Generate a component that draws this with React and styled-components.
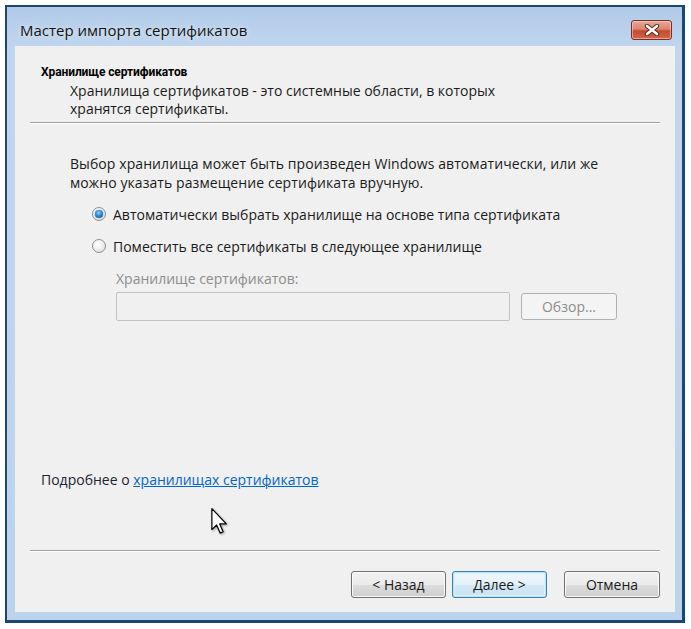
import React from "react";
import styled, { createGlobalStyle, css } from "styled-components";

const GlobalStyle = createGlobalStyle`
  html, body { margin: 0; padding: 0; background: #ffffff; }
  body { font-family: "Open Sans", "Noto Sans", sans-serif; }
  * { box-sizing: border-box; }
`;

const Page = styled.div`
  padding: 5px 0 0 5px;
`;

const Window = styled.div`
  width: 680px;
  height: 618px;
  border-style: solid;
  border-color: #1b4774;
  border-width: 2px 3px 3px 2px;
  background: linear-gradient(to bottom, #b0cae7 0px, #c0d6ee 40px, #bcd3ec 100%);
  padding: 0 7px 8px 8px;
  display: flex;
  flex-direction: column;
`;

const TitleBar = styled.div`
  height: 39px;
  padding: 13px 3px 0 5px;
  display: flex;
  justify-content: space-between;
  align-items: flex-start;
`;

const TitleText = styled.div`
  font-size: 15px;
  line-height: 20px;
  color: #141414;
  text-shadow: 0 0 6px rgba(255, 255, 255, 0.8);
`;

const CloseButton = styled.div`
  width: 41px;
  height: 20px;
  border: 1px solid #7d2d1f;
  border-radius: 3px;
  background: linear-gradient(
    to bottom,
    #e8a899 0%,
    #d98571 45%,
    #c44b31 55%,
    #d2664c 100%
  );
  box-shadow: inset 0 0 0 1px rgba(255, 220, 210, 0.55);
  display: flex;
  align-items: center;
  justify-content: center;
`;

const Client = styled.div`
  position: relative;
  height: 566px;
  background: #f0f0f0;
  display: flex;
  flex-direction: column;
  font-size: 14px;
  color: #1b1b1b;
`;

const Header = styled.div`
  padding: 17px 0 0 26px;
`;

const HeaderTitle = styled.div`
  font-family: Roboto, "Open Sans", sans-serif;
  font-weight: 700;
  font-size: 12px;
  letter-spacing: -0.1px;
  line-height: 19px;
  color: #000;
`;

const HeaderSub = styled.div`
  padding-left: 29px;
  line-height: 18px;
`;

const Separator = styled.div`
  margin: ${(p) => p.$top || 0}px 15px 0;
  border-top: 1px solid #a0a0a0;
  border-bottom: 1px solid #ffffff;
`;

const Body = styled.div`
  flex: 1;
  padding: 30px 0 0 55px;
`;

const Intro = styled.div`
  line-height: 19px;
  letter-spacing: 0.08px;
`;

const RadioList = styled.div`
  margin-top: 11px;
  margin-left: 22px;
  display: flex;
  flex-direction: column;
  gap: 10px;
`;

const RadioRow = styled.div`
  height: 22px;
  display: flex;
  align-items: center;
  gap: 7px;
`;

const RadioCircle = styled.span`
  width: 14px;
  height: 14px;
  border-radius: 50%;
  border: 1px solid #8b8e91;
  background: radial-gradient(circle at 40% 35%, #ffffff 0%, #f2f2f2 40%, #d6d6d6 100%);
  display: flex;
  align-items: center;
  justify-content: center;
  flex-shrink: 0;
  ${(p) =>
    p.$checked &&
    css`
      &::after {
        content: "";
        width: 8px;
        height: 8px;
        border-radius: 50%;
        background: radial-gradient(circle at 45% 35%, #8fd0ff 0%, #2a8ad8 45%, #0f4f96 100%);
        box-shadow: 0 0 1px #0c3b70;
      }
    `}
`;

const StoreGroup = styled.div`
  margin-left: 46px;
  margin-top: 12px;
`;

const StoreLabel = styled.div`
  line-height: 19px;
  color: #8d8d8d;
`;

const StoreRow = styled.div`
  margin-top: 4px;
  display: flex;
  align-items: center;
  gap: 11px;
`;

const StoreInput = styled.input`
  width: 394px;
  height: 29px;
  border: 1px solid #c3c3c3;
  border-radius: 2px;
  background: #f0f0f0;
  margin: 0;
  padding: 0 4px;
  font: inherit;
`;

const buttonBase = css`
  height: 27px;
  border-radius: 3px;
  font-family: inherit;
  font-size: 14px;
  padding: 0;
  display: flex;
  align-items: center;
  justify-content: center;
`;

const BrowseButton = styled.button`
  ${buttonBase};
  width: 96px;
  border: 1px solid #adb2b5;
  background: #f4f4f4;
  color: #8d8d8d;
`;

const LinkRow = styled.div`
  padding-left: 26px;
  margin-bottom: 61px;
  line-height: 19px;
  color: #1c2433;
`;

const Link = styled.a`
  color: #0066cc;
  text-decoration: underline;
`;

const ButtonRow = styled.div`
  display: flex;
  justify-content: flex-end;
  padding: 19px 15px 14px;
`;

const WizardButton = styled.button`
  ${buttonBase};
  width: ${(p) => p.$width}px;
  margin-left: ${(p) => p.$gap || 0}px;
  color: #1b1b1b;
  border: 1px solid #707070;
  background: linear-gradient(to bottom, #f2f2f2 0%, #ebebeb 50%, #dddddd 51%, #cfcfcf 100%);
  box-shadow: inset 0 0 0 1px #fbfbfb;
  ${(p) =>
    p.$default &&
    css`
      border-color: #3c7fb1;
      background: linear-gradient(to bottom, #eef7fd 0%, #e4f1fa 50%, #d4e8f5 51%, #c9e2f2 100%);
      box-shadow: inset 0 0 0 1px #b9e4f8, inset 0 0 0 2px #dff2fb;
    `}
`;

const Cursor = styled.svg`
  position: absolute;
  left: 196px;
  top: 462px;
  filter: drop-shadow(1px 1px 1px rgba(0, 0, 0, 0.35));
`;

function CloseGlyph() {
  return (
    <svg width="16" height="12" viewBox="0 0 16 12">
      <path d="M3 2 L13 10 M13 2 L3 10" stroke="#5a2418" strokeWidth="4.4" strokeLinecap="round" />
      <path d="M3 2 L13 10 M13 2 L3 10" stroke="#ffffff" strokeWidth="2.6" strokeLinecap="round" />
    </svg>
  );
}

export default function App() {
  return (
    <>
      <GlobalStyle />
      <Page>
        <Window>
          <TitleBar>
            <TitleText>Мастер импорта сертификатов</TitleText>
            <CloseButton>
              <CloseGlyph />
            </CloseButton>
          </TitleBar>
          <Client>
            <Header>
              <HeaderTitle>Хранилище сертификатов</HeaderTitle>
              <HeaderSub>
                Хранилища сертификатов - это системные области, в которых
                <br />
                хранятся сертификаты.
              </HeaderSub>
            </Header>
            <Separator $top={4} />
            <Body>
              <Intro>
                Выбор хранилища может быть произведен Windows автоматически, или же
                <br />
                можно указать размещение сертификата вручную.
              </Intro>
              <RadioList>
                <RadioRow>
                  <RadioCircle $checked />
                  <span>Автоматически выбрать хранилище на основе типа сертификата</span>
                </RadioRow>
                <RadioRow>
                  <RadioCircle />
                  <span>Поместить все сертификаты в следующее хранилище</span>
                </RadioRow>
              </RadioList>
              <StoreGroup>
                <StoreLabel>Хранилище сертификатов:</StoreLabel>
                <StoreRow>
                  <StoreInput disabled />
                  <BrowseButton disabled>Обзор...</BrowseButton>
                </StoreRow>
              </StoreGroup>
            </Body>
            <LinkRow>
              Подробнее о <Link>хранилищах сертификатов</Link>
            </LinkRow>
            <Separator />
            <ButtonRow>
              <WizardButton $width={95}>&lt; Назад</WizardButton>
              <WizardButton $width={95} $gap={6} $default>
                Далее &gt;
              </WizardButton>
              <WizardButton $width={96} $gap={17}>
                Отмена
              </WizardButton>
            </ButtonRow>
            <Cursor width="18" height="27" viewBox="0 0 13 20">
              <path
                d="M0.5 0.5 L0.5 16 L4 12.6 L6.6 18.6 L8.8 17.6 L6.3 11.8 L11.2 11.8 Z"
                fill="#ffffff"
                stroke="#000000"
                strokeWidth="0.9"
                strokeLinejoin="round"
              />
            </Cursor>
          </Client>
        </Window>
      </Page>
    </>
  );
}
